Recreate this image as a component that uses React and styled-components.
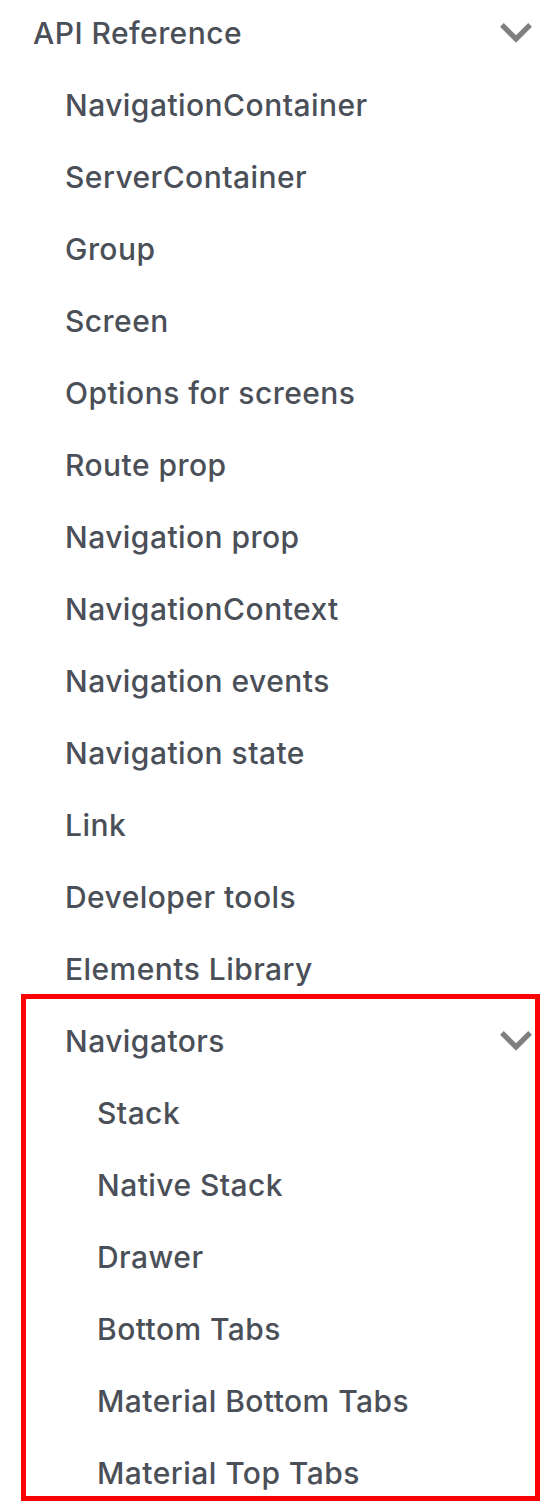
import React from "react";
import styled, { createGlobalStyle } from "styled-components";

const Global = createGlobalStyle`
  html, body { margin: 0; padding: 0; background: #ffffff; }
  body { font-family: Inter, "Noto Sans", "Liberation Sans", sans-serif; }
`;

const Sidebar = styled.nav`
  width: 556px;
  padding-top: 1px;
`;

const List = styled.ul`
  list-style: none;
  margin: ${(p) => (p.$root ? "0" : "8px 0 0")};
  padding: ${(p) => (p.$root ? "0 21px 0 9px" : "0 0 0 32px")};
`;

const Item = styled.li`
  position: relative;
  & + & { margin-top: 8px; }
  ${(p) =>
    p.$highlight &&
    `
    &::after {
      content: "";
      position: absolute;
      left: -20px;
      right: -5px;
      top: -15px;
      bottom: 4px;
      border: 5px solid #ff0000;
      box-sizing: border-box;
      pointer-events: none;
    }
  `}
`;

const Link = styled.a`
  display: flex;
  align-items: center;
  justify-content: space-between;
  padding: 12px 0 12px 24px;
  font-size: 30px;
  font-weight: 500;
  letter-spacing: 0.45px;
  line-height: 40px;
  color: #4a4f58;
  text-decoration: none;
  cursor: pointer;
`;

const Caret = styled.svg`
  flex: none;
  width: 32px;
  height: 19.76px;
  margin-right: 3px;
`;

const Chevron = () => (
  <Caret viewBox="6 8.59 12 7.41" aria-hidden="true">
    <path
      d="M16.59 8.59L12 13.17 7.41 8.59 6 10l6 6 6-6z"
      fill="rgba(0,0,0,0.5)"
    />
  </Caret>
);

const apiItems = [
  "NavigationContainer",
  "ServerContainer",
  "Group",
  "Screen",
  "Options for screens",
  "Route prop",
  "Navigation prop",
  "NavigationContext",
  "Navigation events",
  "Navigation state",
  "Link",
  "Developer tools",
  "Elements Library",
];

const navigators = [
  "Stack",
  "Native Stack",
  "Drawer",
  "Bottom Tabs",
  "Material Bottom Tabs",
  "Material Top Tabs",
];

export default function App() {
  return (
    <>
      <Global />
      <Sidebar>
        <List $root>
          <Item>
            <Link>
              <span>API Reference</span>
              <Chevron />
            </Link>
            <List>
              {apiItems.map((t) => (
                <Item key={t}>
                  <Link>{t}</Link>
                </Item>
              ))}
              <Item $highlight>
                <Link>
                  <span>Navigators</span>
                  <Chevron />
                </Link>
                <List>
                  {navigators.map((t) => (
                    <Item key={t}>
                      <Link>{t}</Link>
                    </Item>
                  ))}
                </List>
              </Item>
            </List>
          </Item>
        </List>
      </Sidebar>
    </>
  );
}
